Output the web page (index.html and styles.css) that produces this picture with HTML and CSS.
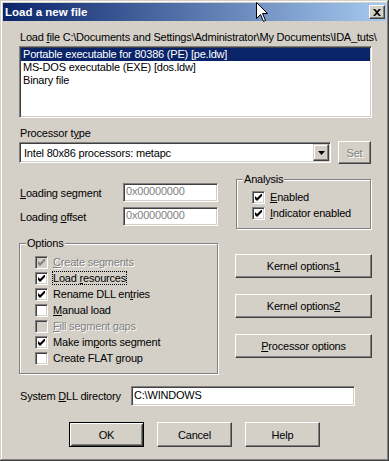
FILE: index.html
```html
<!DOCTYPE html>
<html lang="en">
<head>
    <meta charset="UTF-8">
    <title>Load a new file</title>
    <link rel="stylesheet" href="styles.css">
</head>
<body>
    <div class="dialog">
        <div class="caption">
            <span class="caption-text">Load a new file</span>
            <span class="close-btn">
                <svg width="8" height="7" viewBox="0 0 8 7"><path d="M0 0h2l2 2 2-2h2L5 3.5 8 7H6L4 5 2 7H0l3-3.5z" fill="#000"/></svg>
            </span>
        </div>

        <div class="client">
            <div class="file-label">Load <u>f</u>ile C:\Documents and Settings\Administrator\My Documents\IDA_tuts\</div>

            <ul class="listbox">
                <li class="selected">Portable executable for 80386 (PE) [pe.ldw]</li>
                <li>MS-DOS executable (EXE) [dos.ldw]</li>
                <li>Binary file</li>
            </ul>

            <div class="proc-label">Processor t<u>y</u>pe</div>
            <div class="proc-row">
                <div class="combo">
                    <span class="combo-text">Intel 80x86 processors: metapc</span>
                    <span class="combo-arrow">
                        <svg width="7" height="4" viewBox="0 0 7 4"><path d="M0 0h7L3.5 4z" fill="#000"/></svg>
                    </span>
                </div>
                <button class="btn btn-set" disabled>Set</button>
            </div>

            <div class="mid-row">
                <div class="seg-fields">
                    <div class="field-row">
                        <span class="field-label"><u>L</u>oading segment</span>
                        <div class="edit readonly">0x00000000</div>
                    </div>
                    <div class="field-row">
                        <span class="field-label">Loading <u>o</u>ffset</span>
                        <div class="edit readonly">0x00000000</div>
                    </div>
                </div>
                <div class="group analysis">
                    <span class="legend">Analysis</span>
                    <div class="check-row"><span class="cb checked"></span><span><u>E</u>nabled</span></div>
                    <div class="check-row"><span class="cb checked"></span><span><u>I</u>ndicator enabled</span></div>
                </div>
            </div>

            <div class="opt-row">
                <div class="group options">
                    <span class="legend">Options</span>
                    <div class="check-row disabled"><span class="cb checked"></span><span><u>C</u>reate segments</span></div>
                    <div class="check-row"><span class="cb checked"></span><span class="focus">Load <u>r</u>esources</span></div>
                    <div class="check-row"><span class="cb checked"></span><span>Rename DLL en<u>t</u>ries</span></div>
                    <div class="check-row"><span class="cb"></span><span><u>M</u>anual load</span></div>
                    <div class="check-row disabled"><span class="cb"></span><span><u>F</u>ill segment gaps</span></div>
                    <div class="check-row"><span class="cb checked"></span><span>Make im<u>p</u>orts segment</span></div>
                    <div class="check-row"><span class="cb"></span><span>Create FLAT <u>g</u>roup</span></div>
                </div>
                <div class="side-buttons">
                    <button class="btn">Kernel options<u>1</u></button>
                    <button class="btn">Kernel options<u>2</u></button>
                    <button class="btn"><u>P</u>rocessor options</button>
                </div>
            </div>

            <div class="dll-row">
                <span class="dll-label">System <u>D</u>LL directory</span>
                <div class="edit dll">C:\WINDOWS</div>
            </div>

            <div class="button-row">
                <button class="btn default">OK</button>
                <button class="btn">Cancel</button>
                <button class="btn">Help</button>
            </div>
        </div>

        <!-- mouse pointer left in the screenshot -->
        <svg class="cursor" width="13" height="21" viewBox="0 0 13 21">
            <path d="M0.5 0.5V16.5L4.5 12.5L7.5 19.5L9.5 18.5L6.5 11.5H11.5Z" fill="#fff" stroke="#000" stroke-width="1"/>
        </svg>
    </div>
</body>
</html>
```

FILE: styles.css
```css
* {
    margin: 0;
    padding: 0;
    box-sizing: border-box;
}
:root {
    --face: #D4D0C8;
    --shadow: #808080;
    --dark: #404040;
    --light: #FFFFFF;
    --select: #0A246A;
}
body {
    font-family: "Liberation Sans", Arial, sans-serif;
    font-size: 11px;
    letter-spacing: -0.2px;
    color: #000;
    background: var(--face);
}
button {
    font: inherit;
    color: inherit;
    letter-spacing: inherit;
}
.dialog {
    position: relative;
    width: 389px;
    height: 461px;
    padding: 3px;
    background: var(--face);
    box-shadow: inset -1px -1px 0 var(--dark), inset 1px 1px 0 var(--face),
                inset -2px -2px 0 var(--shadow), inset 2px 2px 0 var(--light);
    overflow: hidden;
}
.caption {
    height: 18px;
    display: flex;
    align-items: center;
    padding-left: 2px;
    background: linear-gradient(to right, #0A246A, #A6CAF0);
    color: #fff;
    font-weight: bold;
    font-size: 11.5px;
    letter-spacing: 0;
}
.close-btn {
    margin-left: auto;
    margin-right: 1px;
    width: 16px;
    height: 14px;
    display: flex;
    align-items: center;
    justify-content: center;
    background: var(--face);
    border: 1px solid;
    border-color: var(--light) var(--dark) var(--dark) var(--light);
    box-shadow: inset -1px -1px 0 var(--shadow), inset 1px 1px 0 var(--face);
}
.client {
    padding: 0 14px 0 16px;
}
.file-label {
    margin-top: 10px;
    height: 13px;
    line-height: 13px;
    padding-left: 1px;
    margin-right: -13px;
    white-space: nowrap;
}

/* sunken controls */
.listbox,
.combo,
.edit,
.cb {
    background: #fff;
    border: 1px solid;
    border-color: var(--shadow) var(--light) var(--light) var(--shadow);
    box-shadow: inset 1px 1px 0 var(--dark), inset -1px -1px 0 var(--face);
}
.listbox {
    list-style: none;
    margin-top: 2px;
    height: 72px;
    padding: 1px;
}
.listbox li {
    height: 13px;
    line-height: 13px;
    padding-left: 2px;
    white-space: nowrap;
}
.listbox li.selected {
    background: var(--select);
    color: #fff;
}
.proc-label {
    margin-top: 9px;
    height: 13px;
    line-height: 13px;
    padding-left: 1px;
}
.proc-row {
    display: flex;
    height: 23px;
    margin-top: 1px;
}
.combo {
    width: 312px;
    height: 21px;
    margin-top: 1px;
    padding: 1px;
    display: flex;
    align-items: center;
}
.combo-text {
    padding-left: 3px;
}
.combo-arrow {
    margin-left: auto;
    width: 16px;
    height: 17px;
    display: flex;
    align-items: center;
    justify-content: center;
    background: var(--face);
    border: 1px solid;
    border-color: var(--face) var(--dark) var(--dark) var(--face);
    box-shadow: inset -1px -1px 0 var(--shadow), inset 1px 1px 0 var(--light);
}

/* raised buttons */
.btn {
    height: 24px;
    background: var(--face);
    border: 1px solid;
    border-color: var(--light) var(--dark) var(--dark) var(--light);
    box-shadow: inset -1px -1px 0 var(--shadow), inset 1px 1px 0 var(--face);
    text-align: center;
}
.btn:disabled {
    color: var(--shadow);
    text-shadow: 1px 1px 0 var(--light);
}
.btn.default {
    border: 1px solid #000;
    box-shadow: inset 1px 1px 0 var(--light), inset -1px -1px 0 var(--dark),
                inset 2px 2px 0 var(--face), inset -2px -2px 0 var(--shadow);
}
.btn-set {
    margin-left: auto;
    margin-right: 1px;
    width: 33px;
    height: 23px;
}

.mid-row {
    display: flex;
    height: 50px;
    margin-top: 15px;
}
.seg-fields {
    display: flex;
    flex-direction: column;
    gap: 5px;
    padding-top: 4px;
}
.field-row {
    display: flex;
    align-items: center;
    height: 19px;
}
.field-label {
    width: 104px;
    padding-left: 1px;
}
.edit {
    width: 95px;
    height: 19px;
    padding: 0 2px;
    line-height: 15px;
    white-space: nowrap;
}
.edit.readonly {
    color: var(--shadow);
}

/* group boxes */
.group {
    position: relative;
    border: 1px solid var(--shadow);
    box-shadow: inset 1px 1px 0 var(--light), 1px 1px 0 var(--light);
}
.legend {
    position: absolute;
    top: -7px;
    left: 6px;
    padding: 0 1px;
    line-height: 13px;
    background: var(--face);
}
.analysis {
    width: 135px;
    height: 50px;
    margin-left: auto;
    margin-right: 1px;
    padding: 9px 0 0 15px;
}
.check-row {
    display: flex;
    align-items: center;
    gap: 5px;
    height: 16px;
    white-space: nowrap;
}
.cb {
    width: 13px;
    height: 13px;
    flex: none;
    position: relative;
}
.cb.checked::after {
    content: "";
    position: absolute;
    left: 2px;
    top: 2px;
    width: 7px;
    height: 7px;
    background: url('data:image/svg+xml,%3Csvg xmlns="http://www.w3.org/2000/svg" width="7" height="7" viewBox="0 0 7 7"%3E%3Cpath d="M0 2L2 4L7 -1V2L2 7L0 5Z" fill="%23000"/%3E%3C/svg%3E') no-repeat;
}
.check-row.disabled {
    color: var(--shadow);
    text-shadow: 1px 1px 0 var(--light);
}
.check-row.disabled .cb {
    background: var(--face);
}
.check-row.disabled .cb.checked::after {
    background: url('data:image/svg+xml,%3Csvg xmlns="http://www.w3.org/2000/svg" width="7" height="7" viewBox="0 0 7 7"%3E%3Cpath d="M0 2L2 4L7 -1V2L2 7L0 5Z" fill="%23808080"/%3E%3C/svg%3E') no-repeat;
}
.focus {
    outline: 1px dotted #000;
}

.opt-row {
    display: flex;
    margin-top: 14px;
}
.options {
    width: 199px;
    height: 131px;
    padding: 10px 0 0 15px;
}
.side-buttons {
    margin-left: auto;
    width: 137px;
    padding-top: 11px;
    display: flex;
    flex-direction: column;
    gap: 16px;
}

.dll-row {
    display: flex;
    align-items: center;
    margin-top: 12px;
}
.dll-label {
    width: 112px;
    padding-left: 1px;
}
.edit.dll {
    width: 224px;
    height: 20px;
    line-height: 16px;
}

.button-row {
    display: flex;
    gap: 13px;
    padding-left: 50px;
    margin-top: 16px;
}
.button-row .btn {
    width: 75px;
    height: 25px;
}

.cursor {
    position: absolute;
    left: 256px;
    top: 2px;
}
```
